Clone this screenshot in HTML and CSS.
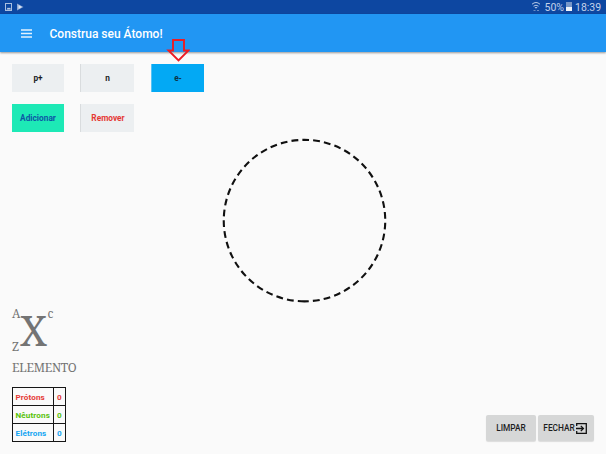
FILE: index.html
```
<!DOCTYPE html>
<html lang="pt-BR">
<head>
<meta charset="utf-8">
<title>Construa seu Átomo!</title>
<link rel="stylesheet" href="styles.css">
</head>
<body>
<div class="status">
  <svg class="notices" width="30" height="14" viewBox="0 0 30 14">
    <rect x="5.500" y="3.500" width="6" height="7" fill="none" stroke="#a9bfe0"/>
    <path d="M6.500 9.500l1.500-2 1 1 1-1 1 2z" fill="#d5e0f0"/>
    <path d="M17 3.500l6.500 3.500-6.500 3.500z" fill="#8ba6d2"/>
    <path d="M18.500 5l3.500 2-3.500 2z" fill="#dce5f3"/>
  </svg>
  <div class="system">
    <svg width="10" height="14" viewBox="0 0 10 14" fill="none" stroke="#b6c9e6">
      <path d="M1 4.200q4-3.400 8 0M2.500 6.200q2.500-2 5 0"/>
      <path d="M3.500 7h3L5 8.800z" fill="#b6c9e6" stroke="none"/>
      <path d="M2.500 10.500h2M6 10.500h2" stroke="#698fc6"/>
    </svg>
    <span class="percent">50%</span>
    <svg width="7" height="14" viewBox="0 0 7 14">
      <path d="M0 2h6v5H0z" fill="#7897c8"/>
      <path d="M0 7h6v4H0z" fill="#f1f5fb"/>
    </svg>
    <span class="clock">18:39</span>
  </div>
</div>
<header class="bar">
  <svg width="11" height="9" viewBox="0 0 11 9"><path d="M0 1h11M0 4.500h11M0 8h11" stroke="#e4f2fe" stroke-width="1.300"/></svg>
  <h1>Construa seu Átomo!</h1>
  <svg class="pointer" width="24" height="25" viewBox="-.5 .5 24 25"><path d="M6.500 1.500h11v10.500H22L12 22 2 12h4.500z" fill="none" stroke="#ed1c24" stroke-width="1.900"/></svg>
</header>
<main>
  <div class="controls">
    <button class="first">p+</button>
    <button>n</button>
    <button class="selected">e-</button>
    <button class="first add">Adicionar</button>
    <button class="remove">Remover</button>
  </div>
  <svg class="shell" width="166" height="166" viewBox="-.5 -.6 166 166">
    <path d="M83 163.750A80.750 80.750 0 0 1 83 2.250A80.750 80.750 0 0 1 83 163.750" fill="none" stroke="#101010" stroke-width="2.100" stroke-dasharray="6.800 4.117"/>
  </svg>
  <footer>
    <section class="info">
      <div class="symbol">
        <div class="numbers"><span>A</span><span>Z</span></div>
        <span class="letter">X</span>
        <span class="charge">c</span>
      </div>
      <div class="element">ELEMENTO</div>
      <table>
        <tr class="protons"><td>Prótons</td><td>0</td></tr>
        <tr class="neutrons"><td>Nêutrons</td><td>0</td></tr>
        <tr class="electrons"><td>Elétrons</td><td>0</td></tr>
      </table>
    </section>
    <div class="actions">
      <button class="clear">LIMPAR</button>
      <button class="close">FECHAR<svg width="11" height="11" viewBox="0 0 11 11" fill="none" stroke="#111" stroke-width="1.300"><path d="M.700 3V.700h9.600v9.600H.700V8M0 5.500h7M4.800 2.900l2.600 2.600-2.600 2.600"/></svg></button>
    </div>
  </footer>
</main>
</body>
</html>
```
FILE: styles.css
```
* { box-sizing: border-box; }
body {
  margin: 0;
  width: 606px;
  height: 454px;
  overflow: hidden;
  display: flex;
  flex-direction: column;
  background: #fafafa;
  font-family: Roboto, sans-serif;
}
svg { display: block; flex: none; }
button { border: 0; padding: 0; font: 500 8.300px Roboto, sans-serif; color: #1b1d1f; }
.status {
  height: 14px;
  flex: none;
  display: flex;
  justify-content: space-between;
  background: #0d47a1;
  color: #c3d2ea;
  font-size: 10.500px;
  line-height: 15px;
}
.system { display: flex; padding-right: 5px; }
.percent { margin-left: 4px; width: 21px; }
.clock { margin-left: 2.500px; width: 26px; }
.bar {
  position: relative;
  z-index: 1;
  height: 38px;
  flex: none;
  display: flex;
  align-items: center;
  padding-left: 21px;
  background: #2196f3;
  box-shadow: 0 1px 2px rgba(0, 0, 0, .4);
}
h1 { margin: 2px 0 0 17.500px; font-size: 12px; font-weight: 500; line-height: 16px; color: #fff; }
.pointer { position: absolute; left: 166px; top: 25px; }
main { flex: 1; display: flex; flex-direction: column; padding: 12px; }
.controls {
  display: grid;
  grid-template-columns: 52px 54px 53px;
  grid-template-rows: 28px 28px;
  column-gap: 16px;
  row-gap: 12px;
  height: 68px;
}
.controls button { background: #eceff1; border-left: 1px solid #d9dcde; font-weight: 700; font-size: 8.300px; }
.controls button.first { border-left: 0; }
.controls button.selected { margin-left: 1px; width: 53px; background: #03a9f4; border-left-color: #55c2f5; color: #0c3448; }
.controls button.add { background: #1de9b6; color: #0d57a5; }
.controls button.remove { color: #e53935; padding-left: 1px; }
.shell { margin: 5px 0 0 209px; }
footer { margin-top: auto; display: flex; justify-content: space-between; align-items: flex-end; }
.info { color: #747474; font-family: "Noto Serif", "DejaVu Serif Condensed", "DejaVu Serif", serif; }
.symbol { display: flex; height: 46px; margin-top: -1px; }
.numbers { width: 8px; display: flex; flex-direction: column; justify-content: space-between; font-size: 11.900px; line-height: 13px; }
.letter { width: 27.500px; font-size: 41px; line-height: 47px; }
.charge { font-size: 12px; line-height: 13px; }
.element { font-size: 12px; letter-spacing: -.25px; line-height: 17px; margin: 6px 0 11px; width: 66px; }
table { border-collapse: collapse; font: 700 8.100px/15px Roboto, sans-serif; letter-spacing: .12px; width: 54px; table-layout: fixed; }
td { border: 1px solid #161616; padding: 2px 0 0 2.500px; height: 18px; width: 41px; }
td + td { width: 12px; padding-left: 3px; }
.protons { color: #e53935; }
.neutrons { color: #58c20a; }
.electrons { color: #14a5f2; }
.actions { display: flex; gap: 2px; margin-bottom: 1px; }
.actions button {
  height: 26px;
  display: flex;
  align-items: center;
  justify-content: center;
  background: #d6d7d7;
  border-radius: 2px;
  box-shadow: 0 1px 1px rgba(0, 0, 0, .12);
}
.actions .clear { width: 50px; }
.actions .close { width: 56px; gap: 1px; padding-right: 2px; }
```
